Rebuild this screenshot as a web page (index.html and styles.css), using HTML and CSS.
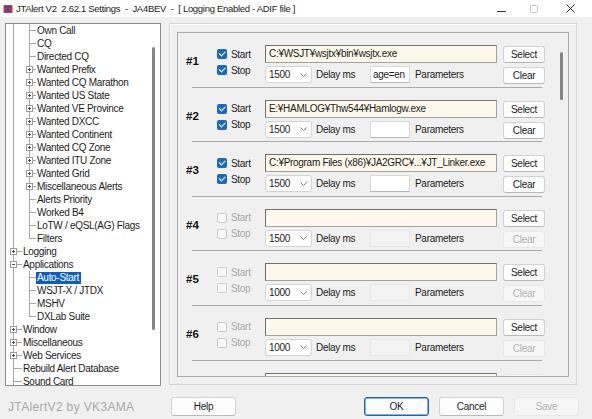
FILE: index.html
```html
<!DOCTYPE html>
<html lang="en">
<head>
  <meta charset="UTF-8">
  <title>JTAlert V2 Settings</title>
  <link rel="stylesheet" href="styles.css">
</head>
<body>
<div class="window">
  <div class="titlebar">
    <svg class="app-icon" width="10" height="10" viewBox="0 0 10 10">
      <rect x="0.5" y="1" width="9" height="8" rx="1" fill="#d6342c"/>
      <path d="M1.5 3h7M5 3v5M2 8l3-2.5 3 2.5" stroke="#2150b8" stroke-width="1.4" fill="none"/>
    </svg>
    <span class="title">JTAlert V2  2.62.1 Settings  -  JA4BEV  -  [ Logging Enabled - ADIF file ]</span>
    <div class="caption">
      <svg class="cap-min" width="9" height="9" viewBox="0 0 9 9"><path d="M0 7.5h9" stroke="#333" stroke-width="1"/></svg>
      <svg class="cap-max" width="8" height="8" viewBox="0 0 8 8"><rect x="0.5" y="0.5" width="7" height="7" rx="1" fill="none" stroke="#c4c4c4"/></svg>
      <svg class="cap-close" width="9" height="9" viewBox="0 0 9 9"><path d="M0.5 0.5l8 8M8.5 0.5l-8 8" stroke="#333" stroke-width="1"/></svg>
    </div>
  </div>

  <div class="body">
    <!-- settings tree -->
    <div class="tree">
      <ul class="nodes">
        <li class="node"><span class="g pipe"></span><span class="g g2 tee"></span><span class="lbl">Own Call</span></li>
        <li class="node"><span class="g pipe"></span><span class="g g2 tee"></span><span class="lbl">CQ</span></li>
        <li class="node"><span class="g pipe"></span><span class="g g2 tee"></span><span class="lbl">Directed CQ</span></li>
        <li class="node"><span class="g pipe"></span><span class="g g2 tee"><span class="exp"></span></span><span class="lbl">Wanted Prefix</span></li>
        <li class="node"><span class="g pipe"></span><span class="g g2 tee"><span class="exp"></span></span><span class="lbl">Wanted CQ Marathon</span></li>
        <li class="node"><span class="g pipe"></span><span class="g g2 tee"><span class="exp"></span></span><span class="lbl">Wanted US State</span></li>
        <li class="node"><span class="g pipe"></span><span class="g g2 tee"><span class="exp"></span></span><span class="lbl">Wanted VE Province</span></li>
        <li class="node"><span class="g pipe"></span><span class="g g2 tee"><span class="exp"></span></span><span class="lbl">Wanted DXCC</span></li>
        <li class="node"><span class="g pipe"></span><span class="g g2 tee"><span class="exp"></span></span><span class="lbl">Wanted Continent</span></li>
        <li class="node"><span class="g pipe"></span><span class="g g2 tee"><span class="exp"></span></span><span class="lbl">Wanted CQ Zone</span></li>
        <li class="node"><span class="g pipe"></span><span class="g g2 tee"><span class="exp"></span></span><span class="lbl">Wanted ITU Zone</span></li>
        <li class="node"><span class="g pipe"></span><span class="g g2 tee"><span class="exp"></span></span><span class="lbl">Wanted Grid</span></li>
        <li class="node"><span class="g pipe"></span><span class="g g2 tee"><span class="exp"></span></span><span class="lbl">Miscellaneous Alerts</span></li>
        <li class="node"><span class="g pipe"></span><span class="g g2 tee"></span><span class="lbl">Alerts Priority</span></li>
        <li class="node"><span class="g pipe"></span><span class="g g2 tee"></span><span class="lbl">Worked B4</span></li>
        <li class="node"><span class="g pipe"></span><span class="g g2 tee"></span><span class="lbl">LoTW / eQSL(AG) Flags</span></li>
        <li class="node"><span class="g pipe"></span><span class="g g2 ell"></span><span class="lbl">Filters</span></li>
        <li class="node"><span class="g tee"><span class="exp"></span></span><span class="lbl">Logging</span></li>
        <li class="node"><span class="g tee"><span class="exp minus"></span></span><span class="lbl">Applications</span></li>
        <li class="node"><span class="g pipe"></span><span class="g g2 tee"></span><span class="lbl sel">Auto-Start</span></li>
        <li class="node"><span class="g pipe"></span><span class="g g2 tee"></span><span class="lbl">WSJT-X / JTDX</span></li>
        <li class="node"><span class="g pipe"></span><span class="g g2 tee"></span><span class="lbl">MSHV</span></li>
        <li class="node"><span class="g pipe"></span><span class="g g2 ell"></span><span class="lbl">DXLab Suite</span></li>
        <li class="node"><span class="g tee"><span class="exp"></span></span><span class="lbl">Window</span></li>
        <li class="node"><span class="g tee"><span class="exp"></span></span><span class="lbl">Miscellaneous</span></li>
        <li class="node"><span class="g tee"><span class="exp"></span></span><span class="lbl">Web Services</span></li>
        <li class="node"><span class="g tee"></span><span class="lbl">Rebuild Alert Database</span></li>
        <li class="node"><span class="g tee"></span><span class="lbl">Sound Card</span></li>
      </ul>
      <div class="vscroll"><div class="thumb"></div></div>
    </div>

    <!-- auto-start page -->
    <div class="group">
      <div class="panel">
        <div class="slots">
          <div class="slot">
            <div class="row">
              <div class="num">#1</div>
              <div class="checks">
                <label class="chk on"><span class="box"></span>Start</label>
                <label class="chk on"><span class="box"></span>Stop</label>
              </div>
              <div class="fields">
                <div class="path">C:¥WSJT¥wsjtx¥bin¥wsjtx.exe</div>
                <div class="line">
                  <div class="combo"><span>1500</span><svg width="7" height="4" viewBox="0 0 7 4"><path d="M0.5 0.5l3 3 3-3" stroke="#808080" fill="none"/></svg></div>
                  <span class="cap">Delay ms</span>
                  <div class="param">age=en</div>
                  <span class="cap params">Parameters</span>
                </div>
              </div>
              <div class="btns"><button class="btn">Select</button><button class="btn">Clear</button></div>
            </div>
            <div class="sep"></div>
          </div>

          <div class="slot">
            <div class="row">
              <div class="num">#2</div>
              <div class="checks">
                <label class="chk on"><span class="box"></span>Start</label>
                <label class="chk on"><span class="box"></span>Stop</label>
              </div>
              <div class="fields">
                <div class="path">E:¥HAMLOG¥Thw544¥Hamlogw.exe</div>
                <div class="line">
                  <div class="combo"><span>1500</span><svg width="7" height="4" viewBox="0 0 7 4"><path d="M0.5 0.5l3 3 3-3" stroke="#808080" fill="none"/></svg></div>
                  <span class="cap">Delay ms</span>
                  <div class="param"></div>
                  <span class="cap params">Parameters</span>
                </div>
              </div>
              <div class="btns"><button class="btn">Select</button><button class="btn">Clear</button></div>
            </div>
            <div class="sep"></div>
          </div>

          <div class="slot">
            <div class="row">
              <div class="num">#3</div>
              <div class="checks">
                <label class="chk on"><span class="box"></span>Start</label>
                <label class="chk on"><span class="box"></span>Stop</label>
              </div>
              <div class="fields">
                <div class="path">C:¥Program Files (x86)¥JA2GRC¥...¥JT_Linker.exe</div>
                <div class="line">
                  <div class="combo"><span>1500</span><svg width="7" height="4" viewBox="0 0 7 4"><path d="M0.5 0.5l3 3 3-3" stroke="#808080" fill="none"/></svg></div>
                  <span class="cap">Delay ms</span>
                  <div class="param"></div>
                  <span class="cap params">Parameters</span>
                </div>
              </div>
              <div class="btns"><button class="btn">Select</button><button class="btn">Clear</button></div>
            </div>
            <div class="sep"></div>
          </div>

          <div class="slot">
            <div class="row">
              <div class="num">#4</div>
              <div class="checks">
                <label class="chk off"><span class="box"></span>Start</label>
                <label class="chk off"><span class="box"></span>Stop</label>
              </div>
              <div class="fields">
                <div class="path"></div>
                <div class="line">
                  <div class="combo"><span>1500</span><svg width="7" height="4" viewBox="0 0 7 4"><path d="M0.5 0.5l3 3 3-3" stroke="#808080" fill="none"/></svg></div>
                  <span class="cap">Delay ms</span>
                  <div class="param off"></div>
                  <span class="cap params">Parameters</span>
                </div>
              </div>
              <div class="btns"><button class="btn">Select</button><button class="btn" disabled>Clear</button></div>
            </div>
            <div class="sep"></div>
          </div>

          <div class="slot">
            <div class="row">
              <div class="num">#5</div>
              <div class="checks">
                <label class="chk off"><span class="box"></span>Start</label>
                <label class="chk off"><span class="box"></span>Stop</label>
              </div>
              <div class="fields">
                <div class="path"></div>
                <div class="line">
                  <div class="combo"><span>1000</span><svg width="7" height="4" viewBox="0 0 7 4"><path d="M0.5 0.5l3 3 3-3" stroke="#808080" fill="none"/></svg></div>
                  <span class="cap">Delay ms</span>
                  <div class="param off"></div>
                  <span class="cap params">Parameters</span>
                </div>
              </div>
              <div class="btns"><button class="btn">Select</button><button class="btn" disabled>Clear</button></div>
            </div>
            <div class="sep"></div>
          </div>

          <div class="slot">
            <div class="row">
              <div class="num">#6</div>
              <div class="checks">
                <label class="chk off"><span class="box"></span>Start</label>
                <label class="chk off"><span class="box"></span>Stop</label>
              </div>
              <div class="fields">
                <div class="path"></div>
                <div class="line">
                  <div class="combo"><span>1000</span><svg width="7" height="4" viewBox="0 0 7 4"><path d="M0.5 0.5l3 3 3-3" stroke="#808080" fill="none"/></svg></div>
                  <span class="cap">Delay ms</span>
                  <div class="param off"></div>
                  <span class="cap params">Parameters</span>
                </div>
              </div>
              <div class="btns"><button class="btn">Select</button><button class="btn" disabled>Clear</button></div>
            </div>
            <div class="sep"></div>
          </div>

          <!-- next slot, scrolled below the fold -->
          <div class="slot">
            <div class="row">
              <div class="num"></div>
              <div class="checks"></div>
              <div class="fields">
                <div class="path"></div>
              </div>
              <div class="btns"><button class="btn" disabled></button></div>
            </div>
          </div>
        </div>
        <div class="vscroll"><div class="thumb"></div></div>
      </div>
    </div>
  </div>

  <div class="footer">
    <span class="credit">JTAlertV2 by VK3AMA</span>
    <button class="btn fbtn">Help</button>
    <div class="actions">
      <button class="btn fbtn default">OK</button>
      <button class="btn fbtn">Cancel</button>
      <button class="btn fbtn" disabled>Save</button>
    </div>
  </div>
</div>
</body>
</html>
```

FILE: styles.css
```css
* {
  box-sizing: border-box;
}
body {
  margin: 0;
  font-family: 'Liberation Sans', Arial, sans-serif;
  font-size: 10px;
  letter-spacing: -0.3px;
  color: #1c1c1c;
}
.window {
  width: 592px;
  height: 419px;
  background: #f0f0f0;
  display: flex;
  flex-direction: column;
  overflow: hidden;
}

/* title bar */
.titlebar {
  height: 17px;
  flex: none;
  background: #fff;
  display: flex;
  align-items: center;
  padding-left: 3px;
}
.app-icon {
  margin-right: 3px;
}
.title {
  font-size: 9.5px;
  white-space: pre;
  color: #1a1a1a;
}
.caption {
  margin-left: auto;
  display: flex;
  align-items: center;
  padding-right: 17px;
}
.cap-max {
  margin-left: 24px;
}
.cap-close {
  margin-left: 28px;
}

.body {
  display: flex;
  gap: 8px;
  padding: 6px 0 0 5px;
}

/* tree */
.tree {
  width: 156px;
  height: 363px;
  border: 1px solid #8c8c8c;
  background: #fff;
  display: flex;
  overflow: hidden;
}
.nodes {
  flex: 1;
  list-style: none;
  margin: 0;
  padding: 0;
}
.node {
  display: flex;
  height: 13px;
  line-height: 13px;
  white-space: nowrap;
}
.g {
  flex: none;
  width: 16px;
  height: 13px;
  display: flex;
  align-items: center;
}
.g2 {
  width: 14px;
}
.pipe {
  background: linear-gradient(#a6a6a6, #a6a6a6) 7px 0 / 1px 100% no-repeat;
}
.tee {
  background:
    linear-gradient(#a6a6a6, #a6a6a6) 7px 0 / 1px 100% no-repeat,
    linear-gradient(#a6a6a6, #a6a6a6) 7px 6px / 100% 1px no-repeat;
}
.ell {
  background:
    linear-gradient(#a6a6a6, #a6a6a6) 7px 0 / 1px 7px no-repeat,
    linear-gradient(#a6a6a6, #a6a6a6) 7px 6px / 100% 1px no-repeat;
}
.exp {
  width: 7px;
  height: 7px;
  margin-left: 4px;
  border: 1px solid #9c9c9c;
  background:
    linear-gradient(#505050, #505050) center / 3px 1px no-repeat,
    linear-gradient(#505050, #505050) center / 1px 3px no-repeat,
    #fff;
}
.exp.minus {
  background:
    linear-gradient(#505050, #505050) center / 3px 1px no-repeat,
    #fff;
}
.lbl {
  padding: 0 2px 0 1px;
}
.lbl.sel {
  background: #0b5fc4;
  color: #fff;
  height: 12px;
  line-height: 12px;
  margin-top: 1px;
}
.vscroll {
  flex: none;
  width: 13px;
}
.tree .thumb {
  margin: 23px 0 0 5px;
  width: 3px;
  height: 283px;
  border-radius: 2px;
  background: #858585;
}

/* auto-start page */
.group {
  width: 408px;
  height: 362px;
  border: 1px solid #d4d4d4;
  box-shadow: inset 1px 1px #fff;
  padding: 8px 7px 7px 7px;
}
.panel {
  height: 100%;
  border: 1px solid #a9a9a9;
  display: flex;
  overflow: hidden;
}
.slots {
  flex: 1;
  overflow: hidden;
}
.panel .vscroll {
  width: 14px;
}
.panel .thumb {
  margin: 19px 0 0 6px;
  width: 3px;
  height: 48px;
  border-radius: 2px;
  background: #858585;
}
.slot {
  height: 54.6px;
  display: flex;
  flex-direction: column;
}
.row {
  display: flex;
  padding-top: 12px;
}
.sep {
  margin: auto 12px 0 14px;
  height: 1px;
  background: #ababab;
}
.num {
  width: 39px;
  padding-left: 8px;
  margin-top: 9px;
  font-size: 11.5px;
  font-weight: bold;
  line-height: 14px;
  letter-spacing: 0;
  color: #111;
}
.checks {
  width: 48px;
  display: flex;
  flex-direction: column;
  gap: 6px;
  padding-top: 4px;
}
.chk {
  display: flex;
  align-items: center;
  gap: 4px;
  height: 10px;
}
.box {
  width: 10px;
  height: 10px;
  border-radius: 2px;
  position: relative;
}
.chk.on .box {
  background: #1a68c0;
}
.chk.on .box::after {
  content: '';
  position: absolute;
  left: 2px;
  top: 2px;
  width: 5px;
  height: 2.5px;
  border-left: 1.3px solid #fff;
  border-bottom: 1.3px solid #fff;
  transform: rotate(-45deg);
}
.chk.off {
  color: #a8a8a8;
}
.chk.off .box {
  border: 1px solid #cbcbcb;
  background: #f7f7f7;
}
.fields {
  width: 232px;
  display: flex;
  flex-direction: column;
  gap: 3px;
}
.path {
  height: 18px;
  line-height: 16px;
  padding-left: 3px;
  background: #fdf8e9;
  border: 1px solid #a2a2a2;
  border-top-color: #707070;
  border-left-color: #707070;
  white-space: nowrap;
  overflow: hidden;
}
.line {
  display: flex;
  align-items: center;
  height: 17px;
}
.combo {
  width: 47px;
  height: 17px;
  border: 1px solid #d4d4d4;
  border-radius: 3px;
  background: #fff;
  display: flex;
  align-items: center;
  justify-content: space-between;
  padding: 0 4px 0 3px;
}
.cap {
  margin-left: 4px;
  width: 54px;
}
.cap.params {
  margin-left: 5px;
  width: auto;
}
.param {
  width: 40px;
  height: 17px;
  line-height: 15px;
  padding-left: 2px;
  background: #fff;
  border: 1px solid #d9d9d9;
  border-bottom-color: #b5b5b5;
  overflow: hidden;
  white-space: nowrap;
}
.param.off {
  background: #f3f3f3;
  border-color: #e8e8e8;
}
.btns {
  margin-left: 6px;
  width: 42px;
  display: flex;
  flex-direction: column;
  gap: 4px;
  padding-top: 1px;
}
.btn {
  height: 17px;
  padding: 0;
  font: inherit;
  letter-spacing: inherit;
  color: #1c1c1c;
  background: #fdfdfd;
  border: 1px solid #d2d2d2;
  border-bottom-color: #b9b9b9;
  border-radius: 3px;
}
.btn:disabled {
  color: #b2b2b2;
  background: #f6f6f6;
  border-color: #e8e8e8;
}

/* footer */
.footer {
  display: flex;
  align-items: center;
  height: 19px;
  margin-top: 11px;
  padding: 0 13px 0 8px;
}
.credit {
  width: 163px;
  font-size: 12px;
  letter-spacing: 0.35px;
  color: #a9a9a9;
}
.fbtn {
  width: 65px;
  height: 19px;
}
.actions {
  margin-left: auto;
  display: flex;
  gap: 10px;
}
.fbtn.default {
  border: 1px solid #1566c2;
  box-shadow: inset 0 0 0 0.5px #1566c2;
}
```
